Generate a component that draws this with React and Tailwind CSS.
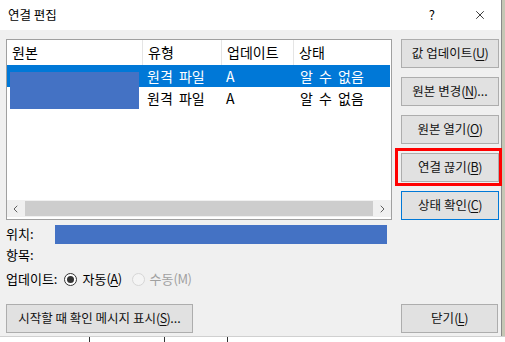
import { X, ChevronLeft, ChevronRight } from "lucide-react";

const FONT = "font-['Noto_Sans_CJK_KR','Noto_Sans',sans-serif]";

const COLS = [
  { label: "원본", w: "w-[136px]" },
  { label: "유형", w: "w-[79px]" },
  { label: "업데이트", w: "w-[72px]" },
  { label: "상태", w: "flex-1" },
];

const ROWS = [
  { type: "원격 파일", update: "A", status: "알 수 없음", selected: true },
  { type: "원격 파일", update: "A", status: "알 수 없음", selected: false },
];

const Key = ({ k }) => (
  <span className="tracking-[-0.5px]">
    (<span className="underline underline-offset-2">{k}</span>)
  </span>
);

const Btn = ({ label, k, dots, primary, className = "" }) => (
  <button
    className={
      "h-[29px] bg-[#e1e1e1] border text-[12.5px] text-[#111] flex items-center justify-center " +
      (primary ? "border-[#0078d7]" : "border-[#adadad]") +
      " " +
      className
    }
  >
    <span>{label}</span>
    <Key k={k} />
    {dots && <span>...</span>}
  </button>
);

export default function App() {
  return (
    <div className={`w-[505px] h-[342px] overflow-hidden flex flex-col bg-white ${FONT}`}>
      <div className="h-[336px] flex">
        <div className="w-[502px] flex flex-col border-r border-[#8a8a8a]">
          {/* title bar */}
          <div className="h-[30px] bg-white flex items-center pl-[8px]">
            <span className="text-[12.5px] text-black">연결 편집</span>
            <span className="ml-auto text-[13px] text-black mr-[38px]">?</span>
            <X className="w-[14px] h-[14px] mr-[14px] text-black" strokeWidth={1.3} />
          </div>

          {/* body */}
          <div className="flex-1 bg-[#f0f0f0] pt-[9px] pl-[6px] flex flex-col">
            <div className="flex">
              {/* left */}
              <div className="w-[386px] flex flex-col">
                <div className="h-[181px] bg-white border border-[#a0a0a0] flex flex-col">
                  <div className="h-[25px] flex text-[14px] text-black">
                    {COLS.map((c, i) => (
                      <div
                        key={c.label}
                        className={`${c.w} flex items-center pl-[5px] ${i < 3 ? "border-r border-[#e5e5e5]" : ""}`}
                      >
                        {c.label}
                      </div>
                    ))}
                  </div>
                  <div className="relative">
                    {ROWS.map((r, i) => (
                      <div
                        key={i}
                        className={`h-[22px] flex items-center text-[14px] [word-spacing:3px] mr-[1px] ${
                          r.selected ? "bg-[#0078d7] text-white" : "text-black"
                        }`}
                      >
                        <div className="w-[136px]" />
                        <div className="w-[79px] pl-[4px]">{r.type}</div>
                        <div className="w-[72px] pl-[4px]">{r.update}</div>
                        <div className="flex-1 pl-[6px]">{r.status}</div>
                      </div>
                    ))}
                    <div className="absolute left-[3px] top-[7px] w-[129px] h-[37px] bg-[#4472c4]" />
                  </div>
                  <div className="flex-1" />
                  <div className="h-[17px] flex items-center bg-[#f0f0f0] mb-[2px]">
                    <ChevronLeft className="w-[17px] h-[12px] text-[#606060]" strokeWidth={2} />
                    <div className="flex-1 h-[15px] bg-[#cdcdcd] mx-[1px]" />
                    <ChevronRight className="w-[17px] h-[12px] text-[#606060]" strokeWidth={2} />
                  </div>
                </div>

                <div className="mt-[4px] h-[20px] flex items-center text-[13px] text-black">
                  <span className="w-[49px]">위치:</span>
                  <div className="w-[332px] h-[19px] bg-[#4472c4]" />
                </div>
                <div className="h-[20px] mt-[1px] flex items-center text-[13px] text-black">항목:</div>
                <div className="h-[22px] mt-[3px] flex items-center text-[13px] text-black">
                  <span>업데이트:</span>
                  <span className="ml-[7px] w-[13px] h-[13px] rounded-full border border-[#333] bg-white flex items-center justify-center">
                    <span className="w-[7px] h-[7px] rounded-full bg-[#333]" />
                  </span>
                  <span className="ml-[5px]">
                    자동
                    <Key k="A" />
                  </span>
                  <span className="ml-[10px] w-[13px] h-[13px] rounded-full border border-[#d6d6d6] bg-[#f4f4f4]" />
                  <span className="ml-[5px] text-[#a0a0a0]">
                    수동<span className="tracking-[-0.5px]">(M)</span>
                  </span>
                </div>
              </div>

              {/* right */}
              <div className="ml-[9px] flex flex-col gap-[9px]">
                <Btn label="값 업데이트" k="U" className="w-[98px]" />
                <Btn label="원본 변경" k="N" dots className="w-[98px]" />
                <Btn label="원본 열기" k="O" className="w-[98px]" />
                <div className="relative">
                  <Btn label="연결 끊기" k="B" className="w-[98px]" />
                  <div className="absolute -left-[6px] -top-[5px] w-[107px] h-[38px] border-[3px] border-[#ff0000]" />
                </div>
                <Btn label="상태 확인" k="C" primary className="w-[98px]" />
              </div>
            </div>

            <div className="mt-[14px] flex pr-[3px]">
              <Btn label="시작할 때 확인 메시지 표시" k="S" dots className="w-[187px] text-[12.5px]" />
              <Btn label="닫기" k="L" className="w-[97px] ml-auto" />
            </div>
          </div>
        </div>
        <div className="flex-1 bg-[#c5c7b5]" />
      </div>
      {/* sheet behind the dialog */}
      <div className="h-[6px] flex bg-white border-t border-[#d0d0d0]">
        <div className="w-[90px] border-r border-[#333]" />
        <div className="w-[75px] border-r border-[#333]" />
        <div className="w-[63px] border-r border-[#333]" />
        <div className="flex-1" />
      </div>
    </div>
  );
}
